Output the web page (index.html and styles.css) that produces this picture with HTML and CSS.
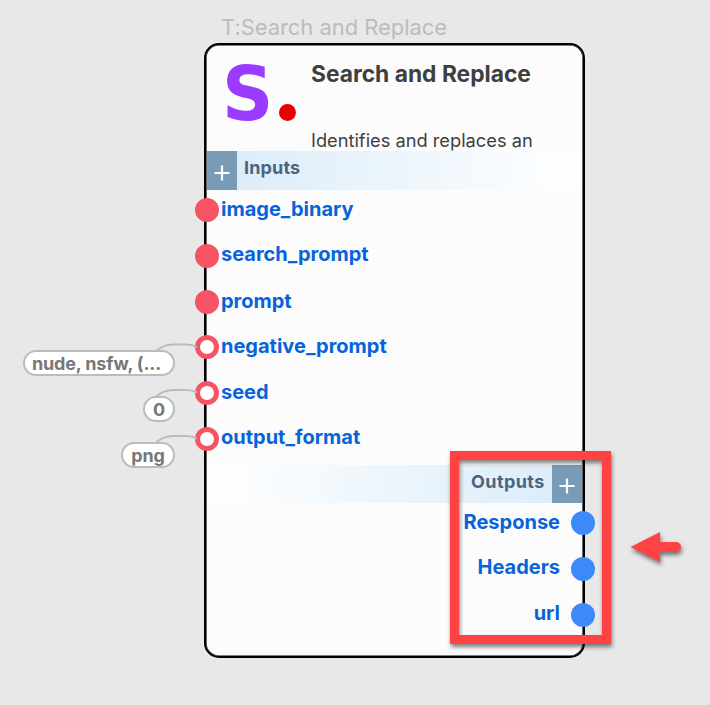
FILE: index.html
```html
<!DOCTYPE html>
<html lang="en">
<head>
<meta charset="utf-8">
<title>Search and Replace</title>
<link rel="stylesheet" href="styles.css">
</head>
<body>
<main class="canvas">
  <div class="node-title"><span>T:Search and Replace</span></div>
  <section class="node">
    <header class="head">
      <div class="logo"><span class="logo-s">S</span><i class="logo-dot"></i></div>
      <div class="about">
        <h1>Search and Replace</h1>
        <p>Identifies and replaces an</p>
      </div>
    </header>
    <div class="bar bar-in">
      <button class="add" aria-label="Add input"><svg width="16" height="16" viewBox="0 0 16 16"><path d="M8 .5v15M.5 8h15"/></svg></button>
      <span>Inputs</span>
    </div>
    <ul class="ports inputs">
      <li><i class="port"></i><span>image_binary</span></li>
      <li><i class="port"></i><span class="up">search_prompt</span></li>
      <li><i class="port"></i><span class="down">prompt</span></li>
      <li><i class="port open"></i><span>negative_prompt</span></li>
      <li><i class="port open"></i><span>seed</span></li>
      <li><i class="port open"></i><span>output_format</span></li>
    </ul>
    <div class="bar bar-out">
      <span>Outputs</span>
      <button class="add" aria-label="Add output"><svg width="16" height="16" viewBox="0 0 16 16"><path d="M8 .5v15M.5 8h15"/></svg></button>
    </div>
    <ul class="ports outputs">
      <li><span>Response</span><i class="port"></i></li>
      <li><span class="up">Headers</span><i class="port"></i></li>
      <li><span>url</span><i class="port"></i></li>
    </ul>
  </section>
  <svg class="wires" width="60" height="120" viewBox="0 0 60 120">
    <path d="M13 12Q21 4.500 31 4.500H44Q50 4.500 55 7"/>
    <path d="M13 57.500Q21 50 31 50H44Q50 50 55 52.500"/>
    <path d="M13 103.500Q21 96 31 96H44Q50 96 55 98.500"/>
  </svg>
  <div class="value v-negative">nude, nsfw, (...</div>
  <div class="value v-seed">0</div>
  <div class="value v-format">png</div>
  <div class="callout"></div>
  <svg class="arrow" width="64" height="44" viewBox="0 0 64 44">
    <path d="M4.500 21L34 6V16H50a5 5 0 0 1 0 10H34V36Z"/>
  </svg>
</main>
</body>
</html>
```
FILE: styles.css
```css
* { box-sizing: border-box; }
body { margin: 0; font-family: Inter, "Liberation Sans", sans-serif; }
.canvas { position: relative; width: 710px; height: 705px; overflow: hidden; background: #e8e8e8; }
.node-title { position: absolute; left: 221px; top: 12px; font-size: 22px; line-height: 30px; letter-spacing: -.06px; color: #bcbcbc; white-space: nowrap; }
.node { position: absolute; left: 204px; top: 42.500px; width: 381px; height: 615.500px; border: 2px solid #000; box-shadow: inset 0 0 0 .6px #000; padding: 0 1px 0 .6px; border-radius: 15px; background: #fcfcfc; display: flex; flex-direction: column; }
.head { display: flex; height: 106.500px; flex: none; }
.logo { display: flex; width: 104.400px; flex: none; padding-left: 15.400px; }
.logo-s { font: bold 75px/75px "DejaVu Sans", sans-serif; color: #9b3bff; width: 57px; padding-top: 12px; transform: scaleX(.95); transform-origin: left; }
.logo-dot { width: 17px; height: 17px; margin-top: 59px; border-radius: 50%; background: #e80000; flex: none; }
h1 { margin: 13px 0 0; font-size: 22.800px; line-height: 32px; font-weight: 700; color: #3f3f3f; white-space: nowrap; }
p { margin: 38px 0 0; font-size: 18.250px; line-height: 24px; color: #3f3f3f; white-space: nowrap; }
.bar { display: flex; flex: none; font-size: 18px; font-weight: 700; color: #4b6580; }
.bar-in { height: 39px; line-height: 34px; letter-spacing: .15px; background: linear-gradient(90deg, #d9ebf9, #fff); }
.bar-in span { margin-left: 7px; }
.bar-out { height: 38px; line-height: 34px; letter-spacing: .4px; justify-content: flex-end; background: linear-gradient(270deg, #d9ebf9, #fff); }
.bar-out span { margin-right: 7px; }
.add { width: 30.400px; height: 100%; border: 0; padding: 4px 0 0; background: #789bb7; display: flex; align-items: center; justify-content: center; }
.add svg { fill: none; stroke: #fff; stroke-width: 2.200; }
.ports { list-style: none; margin: 0; padding: 0; flex: none; font-size: 20px; line-height: 38px; font-weight: 700; color: #0764d8; display: grid; grid-auto-rows: 45.700px; }
.ports li { display: flex; }
.ports .up { margin-top: -1px; }
.ports .down { margin-top: 1px; }
.inputs { height: 275px; }
.port { width: 24px; height: 24px; border-radius: 50%; flex: none; }
.inputs .port { background: #f65365; margin: 8.300px 2.400px 0 -12px; }
.inputs .open { background: #fff; border: 5px solid #f65365; }
.outputs li { justify-content: flex-end; }
.outputs .port { background: #3c8af9; margin: 8.300px -13px 0 11px; }
.wires { position: absolute; left: 142px; top: 340px; fill: none; stroke: #bcbcbc; stroke-width: 2; }
.value { position: absolute; right: 535px; height: 26px; border: 2px solid #bcbcbc; border-radius: 13px; background: #fff; color: #777; font-size: 18px; font-weight: 700; line-height: 23px; text-align: center; white-space: nowrap; }
.v-negative { top: 350px; width: 152px; padding-right: 5px; letter-spacing: -.15px; }
.v-seed { top: 396px; width: 32px; }
.v-format { top: 442px; width: 54px; letter-spacing: -.1px; }
.callout { position: absolute; left: 450px; top: 451px; width: 161px; height: 193px; border: 9px solid #ff4343; filter: drop-shadow(1px 3px 2px rgba(0,0,0,.5)); }
.arrow { position: absolute; left: 626px; top: 526px; fill: #ff4343; filter: drop-shadow(1px 3px 2px rgba(0,0,0,.5)); }
```
